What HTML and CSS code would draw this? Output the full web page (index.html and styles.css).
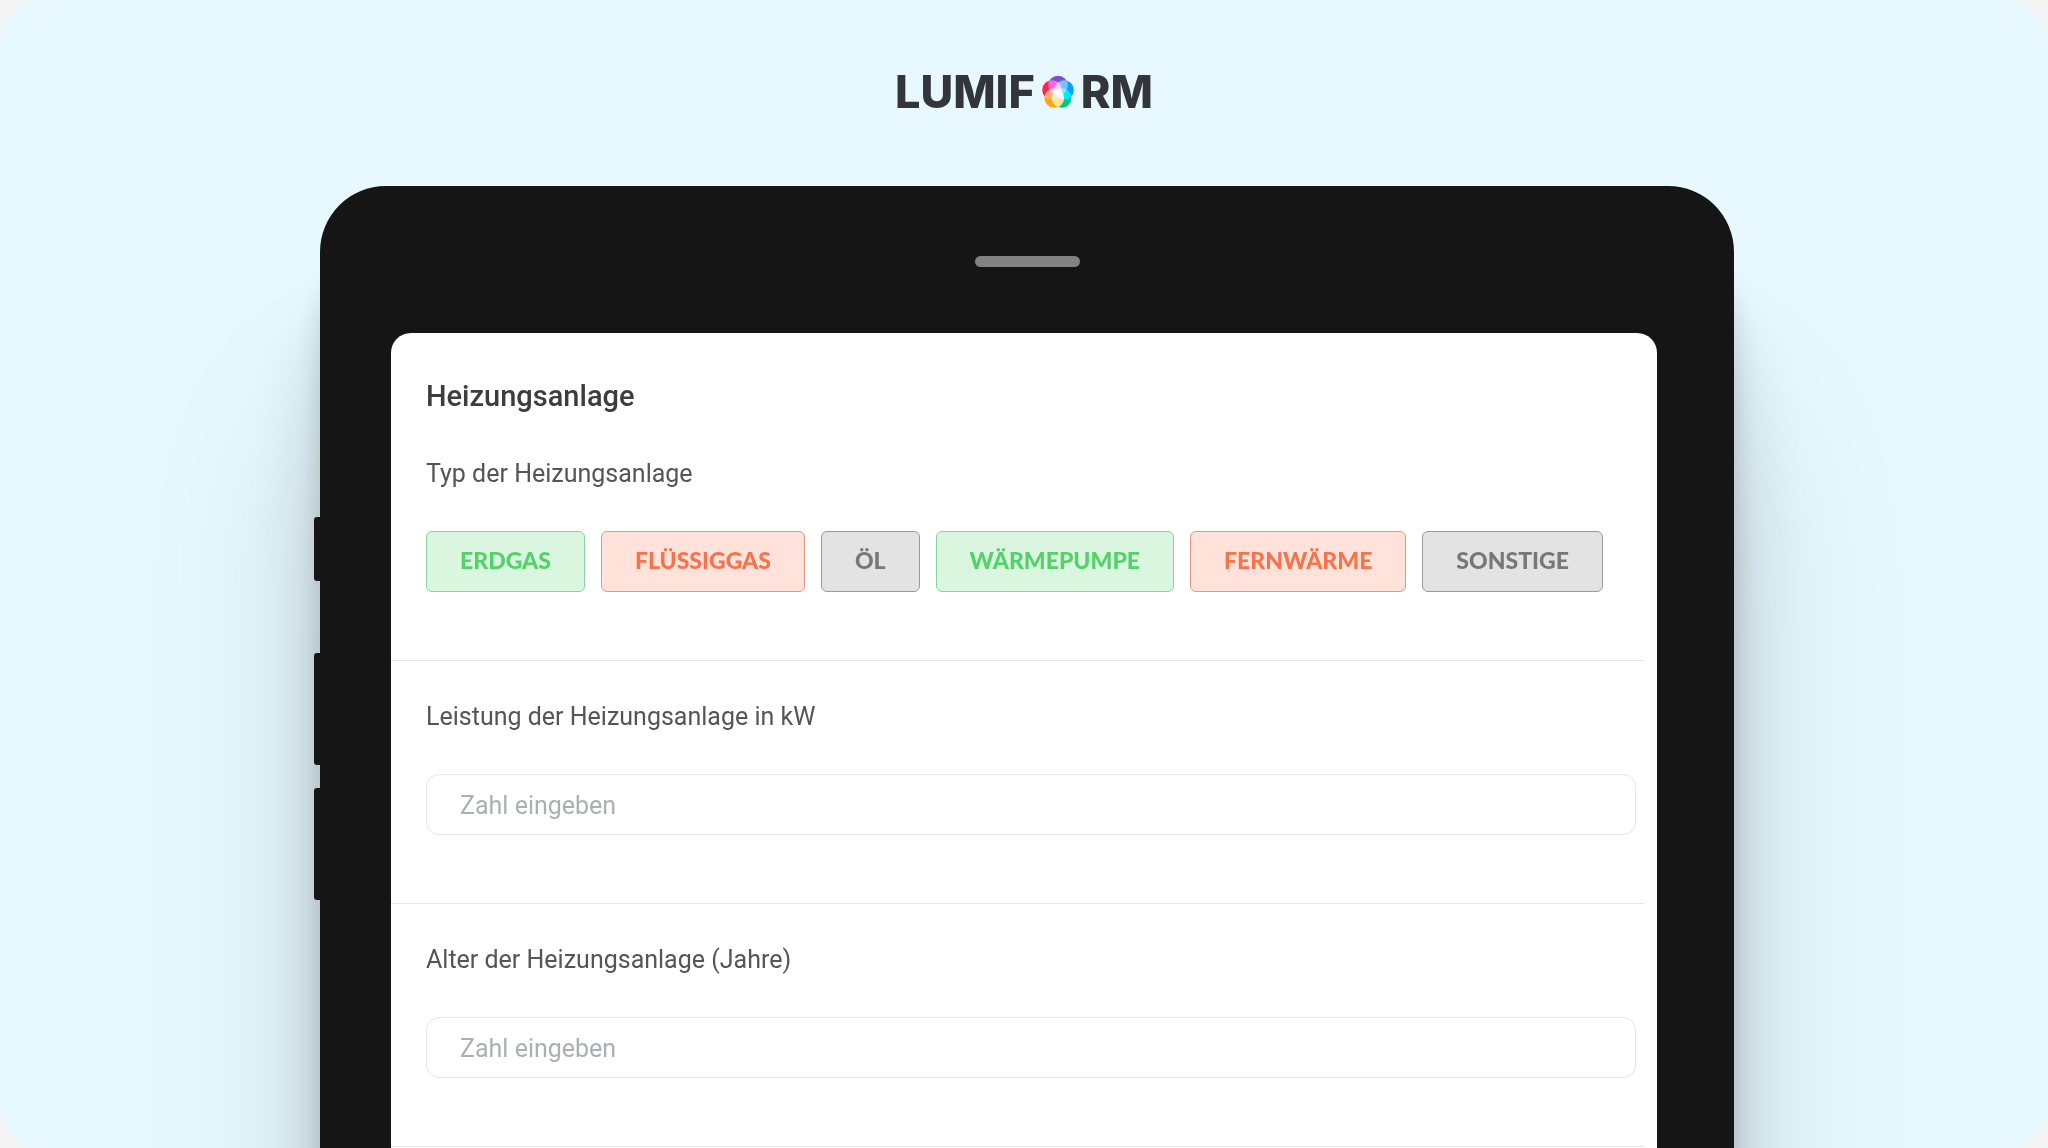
FILE: index.html
```html
<!DOCTYPE html>
<html lang="de">
<head>
    <meta charset="utf-8">
    <meta name="viewport" content="width=device-width, initial-scale=1">
    <title>Lumiform</title>
    <link rel="stylesheet" href="styles.css">
</head>
<body>
    <div class="stage">
        <header class="logo">
            <span>LUMIF</span>
            <svg class="logo-mark" viewBox="0 0 32 34" role="img" aria-label="O">
                <g class="logo-petals">
                    <circle cx="16" cy="10.500" r="9.800" fill="#7a52c8"/>
                    <circle cx="22" cy="15" r="9.800" fill="#00a3ff"/>
                    <circle cx="19.700" cy="23" r="9.800" fill="#00c389"/>
                    <circle cx="12.300" cy="23" r="9.800" fill="#ffa31a"/>
                    <circle cx="10" cy="15" r="9.800" fill="#ff2458"/>
                </g>
            </svg>
            <span>RM</span>
        </header>

        <div class="tablet">
            <div class="tablet-keys">
                <div class="key key--short"></div>
                <div class="key"></div>
                <div class="key"></div>
            </div>
            <div class="tablet-body">
                <div class="bezel">
                    <div class="speaker"></div>
                </div>
                <main class="screen">
                    <section class="question question--first">
                        <h1 class="title">Heizungsanlage</h1>
                        <p class="label" id="typeLabel">Typ der Heizungsanlage</p>
                        <div class="options" role="group" aria-labelledby="typeLabel">
                            <button type="button" class="btn btn--green">ERDGAS</button>
                            <button type="button" class="btn btn--red">FLÜSSIGGAS</button>
                            <button type="button" class="btn btn--grey">ÖL</button>
                            <button type="button" class="btn btn--green">WÄRMEPUMPE</button>
                            <button type="button" class="btn btn--red">FERNWÄRME</button>
                            <button type="button" class="btn btn--grey">SONSTIGE</button>
                        </div>
                    </section>
                    <section class="question">
                        <label class="label" for="powerInput">Leistung der Heizungsanlage in kW</label>
                        <input type="text" inputmode="numeric" id="powerInput" class="text-input" placeholder="Zahl eingeben">
                    </section>
                    <section class="question">
                        <label class="label" for="ageInput">Alter der Heizungsanlage (Jahre)</label>
                        <input type="text" inputmode="numeric" id="ageInput" class="text-input" placeholder="Zahl eingeben">
                    </section>
                </main>
            </div>
        </div>
    </div>
</body>
</html>
```
FILE: styles.css
```css
:root {
    --case: #151515;
    --line: #e6e6e6;
}

* {
    box-sizing: border-box;
}

body {
    background-color: #f5f5f5;
    font-family: Roboto, "Liberation Sans", sans-serif;
    margin: 0;
}

.stage {
    background-color: #e7f9ff;
    border-radius: 42px;
    height: 100vh;
    overflow: hidden;
}

.logo {
    align-items: center;
    color: #32363a;
    display: flex;
    font-family: Inter, sans-serif;
    font-size: 45px;
    font-weight: 800;
    gap: 7px;
    justify-content: center;
    line-height: 54px;
    padding: 65px 0 67px;
}

.logo-mark {
    height: 34px;
    width: 32px;
}

/* overlapping petals add up to white in the middle */
.logo-petals {
    isolation: isolate;
}

.logo-petals circle {
    mix-blend-mode: screen;
}

.tablet {
    display: flex;
    margin: 0 auto;
    max-width: 1420px;
}

.tablet-keys {
    display: flex;
    flex: 0 0 6px;
    flex-direction: column;
    gap: 23px;
    padding-top: 331px;
    z-index: 1;
}

.key {
    background-color: var(--case);
    border-radius: 3px 0 0 3px;
    height: 112px;
}

.key--short {
    height: 64px;
    margin-bottom: 49px;
}

.tablet-body {
    background-color: var(--case);
    border-radius: 66px 66px 0 0;
    box-shadow:
        0 75px 24px rgba(0, 0, 0, 0.12),
        0 125px 70px rgba(0, 0, 0, 0.14),
        0 230px 180px rgba(0, 0, 0, 0.15);
    flex: 1;
    min-width: 0;
    padding: 0 77px 0 71px;
}

.bezel {
    display: flex;
    height: 147px;
    justify-content: center;
    padding: 70px 0 0 6px;
}

.speaker {
    background-color: #828282;
    border-radius: 6px;
    height: 11px;
    width: 105px;
}

.screen {
    background-color: #ffffff;
    border-radius: 20px 20px 0 0;
    padding: 0 13px 240px 0;
}

.question {
    border-bottom: 1px solid var(--line);
    padding: 40px 8px 68px 35px;
}

.question--first {
    padding-top: 45px;
}

.title {
    color: #3d3d3d;
    font-size: 29px;
    font-weight: 500;
    line-height: 36px;
    margin: 0 0 44px;
}

.label {
    color: #555555;
    display: block;
    font-size: 25px;
    line-height: 32px;
    margin: 0 0 41px;
}

.options {
    display: flex;
    flex-wrap: wrap;
    gap: 16px;
}

.btn {
    border: 1px solid;
    border-radius: 6px;
    font-family: Lato, sans-serif;
    font-size: 23px;
    font-weight: 900;
    height: 61px;
    line-height: 28px;
    padding: 0 33px 3px;
}

.btn--green {
    background-color: #daf6de;
    border-color: #86d3a0;
    color: #55d16c;
}

.btn--red {
    background-color: #ffe2da;
    border-color: #e8957d;
    color: #f5734d;
}

.btn--grey {
    background-color: #e3e3e3;
    border-color: #999999;
    color: #777777;
}

.text-input {
    background-color: #ffffff;
    border: 1px solid var(--line);
    border-radius: 13px;
    color: #3d3d3d;
    display: block;
    font-family: inherit;
    font-size: 25px;
    height: 61px;
    padding: 2px 33px 0;
    width: 100%;
}

.text-input::placeholder {
    color: #adafb5;
}
```
